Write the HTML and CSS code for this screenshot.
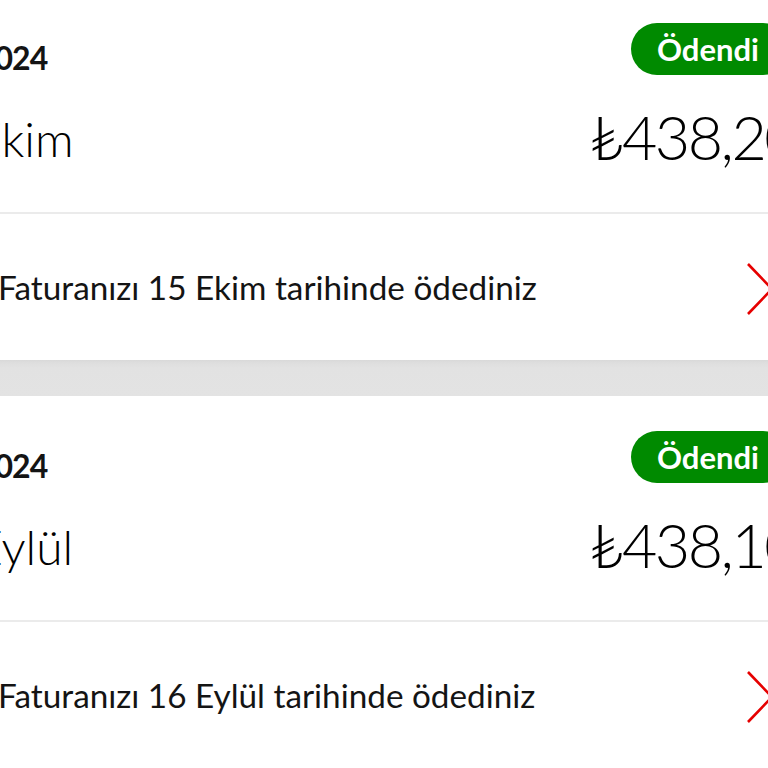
FILE: index.html
```html
<!DOCTYPE html>
<html lang="tr">
<head>
<meta charset="utf-8">
<title>Faturalar</title>
<link rel="stylesheet" href="styles.css">
</head>
<body>
<div class="list">
  <section class="card">
    <div class="card-head">
      <div class="left">
        <div class="period">2024</div>
        <div class="month month-ekim">Ekim</div>
      </div>
      <div class="right">
        <span class="badge">Ödendi</span>
        <div class="amount">₺438,20</div>
      </div>
    </div>
    <div class="card-foot">
      <span class="foot-text">Faturanızı 15 Ekim tarihinde ödediniz</span>
      <svg class="chevron" viewBox="0 0 28 54" width="28" height="54"><path d="M2 2 L26 27 L2 52" fill="none" stroke="#e60000" stroke-width="2.6"/></svg>
    </div>
  </section>
  <div class="gap"></div>
  <section class="card">
    <div class="card-head">
      <div class="left">
        <div class="period">2024</div>
        <div class="month month-eylul">Eylül</div>
      </div>
      <div class="right">
        <span class="badge">Ödendi</span>
        <div class="amount">₺438,10</div>
      </div>
    </div>
    <div class="card-foot">
      <span class="foot-text">Faturanızı 16 Eylül tarihinde ödediniz</span>
      <svg class="chevron" viewBox="0 0 28 54" width="28" height="54"><path d="M2 2 L26 27 L2 52" fill="none" stroke="#e60000" stroke-width="2.6"/></svg>
    </div>
  </section>
</div>
</body>
</html>
```
FILE: styles.css
```css
html, body {
  margin: 0;
  padding: 0;
  width: 768px;
  height: 768px;
  overflow: hidden;
  background: #e2e2e2;
  font-family: Lato, "Noto Sans", sans-serif;
  color: #141414;
}
.list {
  margin-top: -12px;
  width: 768px;
}
.card {
  background: #fff;
}
.card-head {
  display: flex;
  justify-content: space-between;
  border-bottom: 2px solid #ebebeb;
  height: 226px;
  box-sizing: border-box;
}
.left {
  padding-top: 53px;
  overflow: hidden;
}
.period {
  font-size: 32px;
  line-height: 33px;
  font-weight: 700;
  letter-spacing: -1px;
  margin-left: -23px;
  white-space: nowrap;
}
.month {
  font-size: 48px;
  line-height: 48px;
  font-weight: 300;
  color: #000;
  margin-top: 41px;
  white-space: nowrap;
}
.month-ekim { margin-left: -26px; }
.month-eylul { margin-left: -25px; }
.right {
  width: 175px;
  flex: none;
  padding-top: 35px;
  white-space: nowrap;
}
.badge {
  display: inline-block;
  margin-left: 38px;
  height: 52px;
  line-height: 52px;
  padding: 0 30px 0 26px;
  border-radius: 26px;
  background: #008a00;
  color: #fff;
  font-size: 31px;
  font-weight: 700;
}
.amount {
  margin-top: 31px;
  margin-left: -4px;
  font-size: 61px;
  line-height: 61px;
  font-weight: 300;
  letter-spacing: -2.5px;
  color: #000;
}
.card-foot {
  display: flex;
  align-items: center;
  justify-content: space-between;
  height: 146px;
}
.foot-text {
  font-size: 33.3px;
  margin-left: -2px;
  white-space: nowrap;
}
.chevron {
  flex: none;
  margin-right: -6px;
  margin-top: 4px;
}
.gap {
  height: 36px;
  background: linear-gradient(#d9d9d9 0, #dedede 3px, #e2e2e2 8px, #e3e3e3 100%);
}
```
